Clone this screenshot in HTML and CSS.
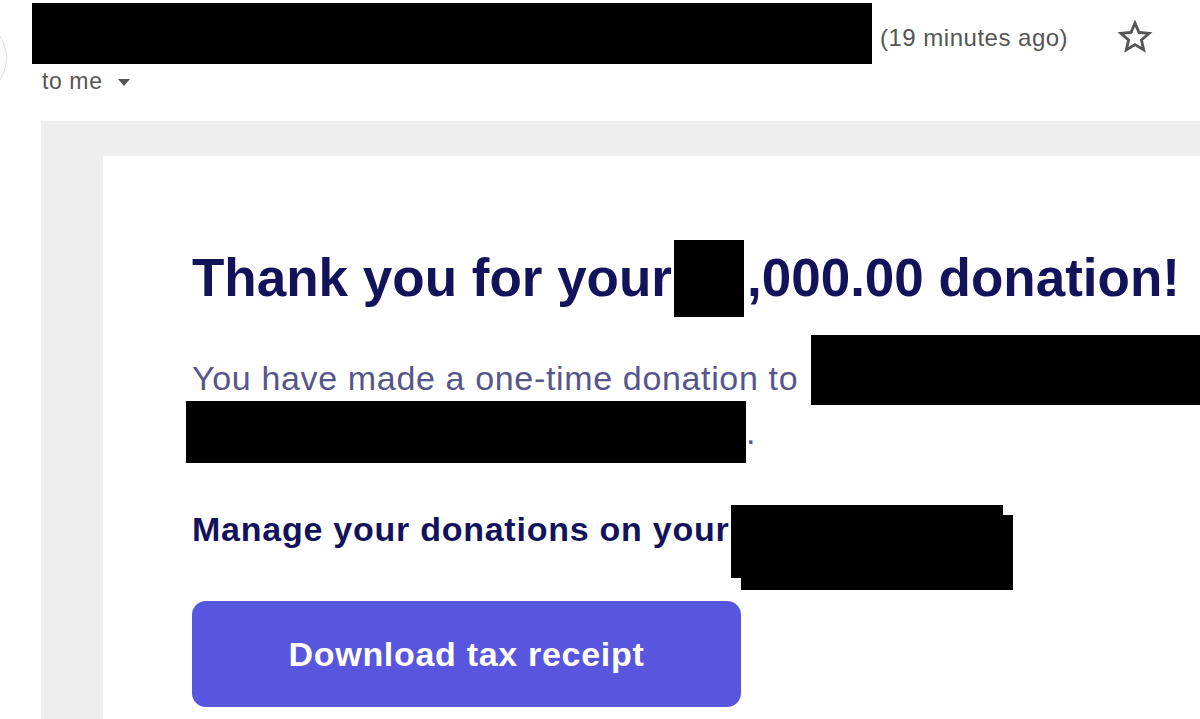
FILE: index.html
```html
<!DOCTYPE html>
<html lang="en">
<head>
<meta charset="utf-8">
<title>Donation receipt</title>
<link rel="stylesheet" href="styles.css">
</head>
<body>
<div class="page">
  <header class="msg-head">
    <div class="avatar"></div>
    <div class="head-row">
      <span class="redact sender"></span>
      <span class="time">(19 minutes ago)</span>
      <svg class="star" viewBox="0 0 24 24" aria-hidden="true"><path d="M22 9.24l-7.19-.62L12 2 9.19 8.63 2 9.24l5.46 4.730L5.82 21 12 17.27 18.18 21l-1.63-7.03L22 9.24zM12 15.4l-3.76 2.27 1-4.28-3.32-2.88 4.38-.38L12 6.1l1.71 4.04 4.38.38-3.32 2.88 1 4.28L12 15.4z"/></svg>
    </div>
    <div class="to">to me<span class="caret"></span></div>
  </header>
  <div class="mail-bg">
    <div class="card">
      <h1 class="title">Thank you for your<span class="redact amount"></span>,000.00 donation!</h1>
      <p class="lead">You have made a one-time donation to <span class="redact org1"></span><br><span class="redact org2"></span>.</p>
      <p class="manage">Manage your donations on your<span class="redact-stack"><span class="r1"></span><span class="r2"></span></span></p>
      <a class="btn">Download tax receipt</a>
    </div>
  </div>
</div>
</body>
</html>
```

FILE: styles.css
```css
html, body {
  margin: 0;
  padding: 0;
  background: #ffffff;
  overflow: hidden;
}
body {
  font-family: "Liberation Sans", Arial, Helvetica, sans-serif;
  width: 1200px;
  height: 719px;
}
.page {
  position: relative;
  width: 1200px;
  height: 719px;
  overflow: hidden;
}
.msg-head {
  position: relative;
  padding: 3px 0 0 32px;
}
.avatar {
  position: absolute;
  left: -73px;
  top: 18px;
  width: 78px;
  height: 78px;
  border: 1px solid #dcdcdc;
  border-radius: 50%;
  background: #fbfbfb;
}
.head-row {
  display: flex;
  align-items: flex-start;
  height: 61px;
}
.redact {
  display: inline-block;
  background: #000;
}
.sender {
  width: 840px;
  height: 61px;
  flex: none;
}
.time {
  margin: 23px 0 0 8px;
  font-size: 24px;
  line-height: 24px;
  letter-spacing: 0.5px;
  color: #555555;
  white-space: nowrap;
}
.star {
  width: 42px;
  height: 42px;
  margin: 13px 0 0 46px;
  fill: #555555;
  flex: none;
}
.to {
  margin-top: 4px;
  padding-left: 10px;
  font-size: 23px;
  line-height: 26px;
  letter-spacing: 0.6px;
  color: #555555;
  display: flex;
  align-items: center;
}
.caret {
  width: 0;
  height: 0;
  margin: 2px 0 0 15px;
  border-left: 6.5px solid transparent;
  border-right: 6.5px solid transparent;
  border-top: 7px solid #555555;
}
.mail-bg {
  margin: 27px 0 0 41px;
  background: #eeeeee;
  padding: 35px 0 0 62px;
  height: 600px;
}
.card {
  background: #ffffff;
  width: 1200px;
  height: 600px;
  padding: 90px 0 0 89px;
  box-sizing: border-box;
}
.title {
  margin: 0;
  font-size: 53px;
  line-height: 64px;
  font-weight: bold;
  color: #13135b;
  white-space: nowrap;
}
.amount {
  width: 70px;
  height: 77px;
  margin: -40px 3px -21px 2px;
}
.lead {
  margin: 41px 0 0 0;
  font-size: 34px;
  line-height: 54px;
  letter-spacing: 0.65px;
  color: #56568a;
  white-space: nowrap;
}
.org1 {
  width: 420px;
  height: 70px;
  margin: -50px 0 -15px 3px;
}
.org2 {
  width: 560px;
  height: 62px;
  margin: -40px 0 -19px -6px;
}
.manage {
  margin: 50px 0 0 0;
  font-size: 34px;
  line-height: 40px;
  letter-spacing: 0.75px;
  font-weight: bold;
  color: #13135b;
  white-space: nowrap;
}
.redact-stack {
  position: relative;
  display: inline-block;
  width: 282px;
  height: 85px;
  margin: -40px 0 -49px 2px;
}
.redact-stack span {
  position: absolute;
  background: #000;
  width: 272px;
}
.redact-stack .r1 {
  left: 0;
  top: 0;
  height: 73px;
}
.redact-stack .r2 {
  left: 10px;
  top: 10px;
  height: 75px;
}
.btn {
  display: flex;
  align-items: center;
  justify-content: center;
  margin-top: 52px;
  width: 549px;
  height: 106px;
  border-radius: 14px;
  background: #5855de;
  color: #ffffff;
  font-size: 34px;
  font-weight: bold;
  letter-spacing: 0.7px;
  text-decoration: none;
}
```
